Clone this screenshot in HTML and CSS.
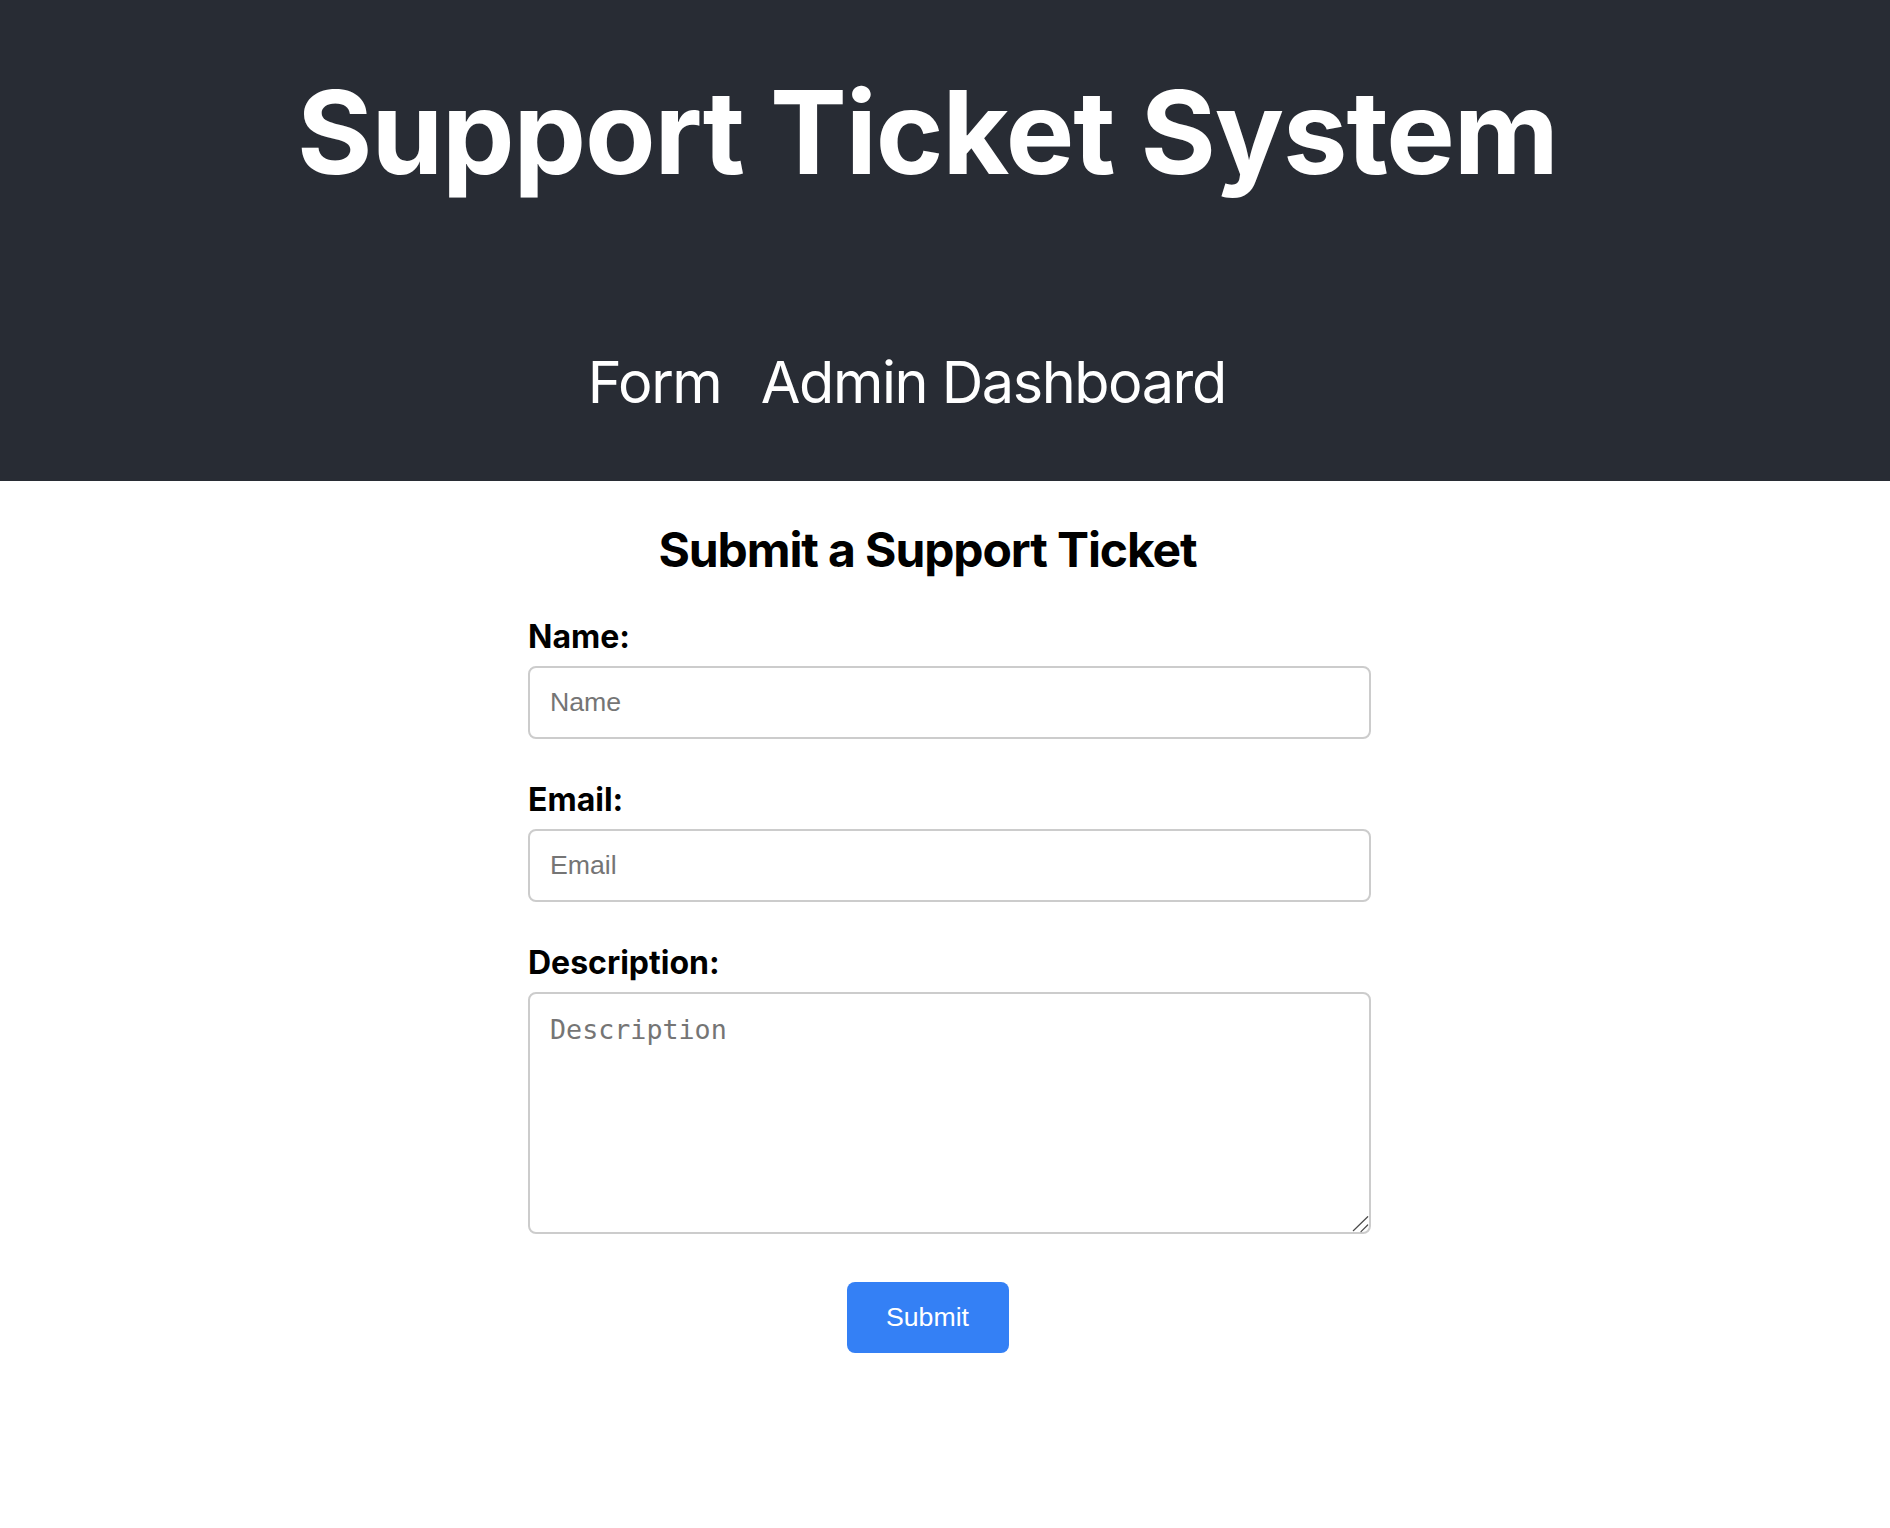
FILE: index.html
```html
<!DOCTYPE html>
<html lang="en">
<head>
<meta charset="utf-8">
<title>Support Ticket System</title>
<link rel="stylesheet" href="styles.css">
</head>
<body>
<header class="app-header">
  <h1 class="app-title">Support Ticket System</h1>
  <nav class="app-nav">
    <a class="nav-link" href="#">Form</a>
    <a class="nav-link" href="#">Admin Dashboard</a>
  </nav>
</header>
<main class="page">
  <section class="ticket">
    <h2 class="ticket-title">Submit a Support Ticket</h2>
    <form class="ticket-form">
      <div class="field">
        <label class="field-label" for="name">Name:</label>
        <input class="field-input" id="name" type="text" placeholder="Name">
      </div>
      <div class="field">
        <label class="field-label" for="email">Email:</label>
        <input class="field-input" id="email" type="email" placeholder="Email">
      </div>
      <div class="field field-last">
        <label class="field-label" for="description">Description:</label>
        <div class="textarea-wrap">
          <textarea class="field-textarea" id="description" placeholder="Description"></textarea>
          <svg class="resizer" width="20" height="20" viewBox="0 0 20 20" aria-hidden="true">
            <line x1="2.3" y1="16.7" x2="16.7" y2="2.7" />
            <line x1="10" y1="17.7" x2="16.7" y2="11" />
          </svg>
        </div>
      </div>
      <div class="actions">
        <button class="submit-btn" type="submit">Submit</button>
      </div>
    </form>
  </section>
</main>
</body>
</html>
```

FILE: styles.css
```css
* {
  box-sizing: border-box;
}

html, body {
  margin: 0;
  padding: 0;
  background: #ffffff;
}

body {
  font-family: Inter, "Noto Sans", sans-serif;
  color: #000000;
}

.app-header {
  background: #282c34;
  color: #ffffff;
  padding: 62px 35px 64px 0;
  display: flex;
  flex-direction: column;
  align-items: center;
}

.app-title {
  margin: 0;
  font-size: 115.2px;
  font-weight: 700;
  line-height: normal;
  letter-spacing: -1.1px;
}

.app-nav {
  margin-top: 145px;
  display: flex;
  gap: 39.5px;
  padding-right: 41.5px;
}

.nav-link {
  color: #ffffff;
  text-decoration: none;
  font-size: 57.6px;
  font-weight: 400;
  line-height: normal;
  letter-spacing: -1.45px;
}

.page {
  padding-right: 35px;
}

.ticket {
  width: 799px;
  margin: 0 auto;
}

.ticket-title {
  margin: 39px 0 0;
  text-align: center;
  font-size: 48px;
  font-weight: 700;
  line-height: normal;
  letter-spacing: -1.1px;
}

.ticket-form {
  margin-top: 38px;
  display: flex;
  flex-direction: column;
}

.field {
  display: flex;
  flex-direction: column;
  width: 843px;
  margin-bottom: 40.8px;
}

.field-last {
  margin-bottom: 48px;
}

.field-label {
  font-size: 32px;
  font-weight: 700;
  line-height: normal;
  margin-bottom: 10px;
}

.field-input {
  height: 73px;
  width: 843px;
  border: 2px solid #cccccc;
  border-radius: 8px;
  padding: 0 20px;
  font-family: "Liberation Sans", Arial, sans-serif;
  font-size: 26.7px;
  color: #000;
  background: #fff;
  outline: none;
}

.field-input::placeholder,
.field-textarea::placeholder {
  color: #757575;
}

.textarea-wrap {
  position: relative;
  width: 843px;
  height: 242px;
}

.field-textarea {
  display: block;
  height: 242px;
  width: 843px;
  border: 2px solid #cccccc;
  border-radius: 8px;
  padding: 20px;
  font-family: "DejaVu Sans Mono", monospace;
  font-size: 26.7px;
  line-height: normal;
  color: #000;
  background: #fff;
  resize: none;
  outline: none;
}

.resizer {
  position: absolute;
  right: 0;
  bottom: 0;
  pointer-events: none;
}

.resizer line {
  stroke: #4a4a4a;
  stroke-width: 1.2;
  stroke-linecap: round;
}

.actions {
  display: flex;
  justify-content: center;
}

.submit-btn {
  width: 162px;
  height: 71px;
  border: none;
  border-radius: 8px;
  background: #3480f5;
  color: #ffffff;
  font-family: "Liberation Sans", Arial, sans-serif;
  font-size: 26.7px;
  cursor: pointer;
}
```
